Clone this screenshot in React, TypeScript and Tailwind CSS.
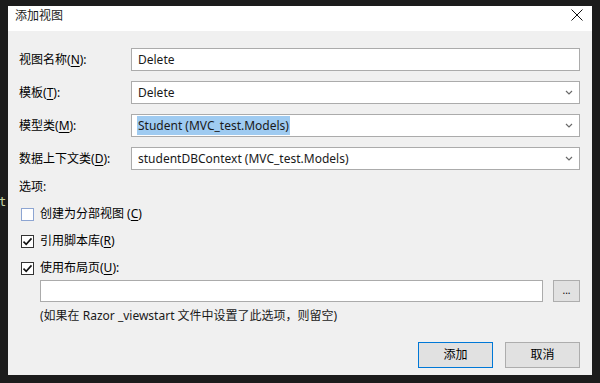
import React from "react";

const FONT = "font-['Noto_Sans','Noto_Sans_CJK_SC',sans-serif]";

function Key({ k }: { k: string }) {
  return <span className="underline underline-offset-2">{k}</span>;
}

function Chevron() {
  return (
    <svg width="8" height="5" viewBox="0 0 8 5" className="shrink-0">
      <path d="M1 1 L4 4 L7 1" fill="none" stroke="#6a6a6a" strokeWidth="1.2" />
    </svg>
  );
}

function Field({ value, combo, selected }: { value: string; combo?: boolean; selected?: boolean }) {
  return (
    <div className="h-[23px] bg-white border border-[#ababab] flex items-center pl-[5px] pr-[6px]">
      <span
        className={
          selected
            ? "bg-[#9fcbf1] px-[1px] leading-[19px] text-[#1a1a1a]"
            : "px-[1px] leading-[19px] text-[#1a1a1a]"
        }
      >
        {value}
      </span>
      <div className="flex-1" />
      {combo && <Chevron />}
    </div>
  );
}

function Check({ checked, hint }: { checked?: boolean; hint?: boolean }) {
  return (
    <div
      className={
        hint
          ? "w-[13px] h-[13px] bg-white border border-[#8da5d2] flex items-center justify-center"
          : "w-[13px] h-[13px] bg-white border border-[#333333] flex items-center justify-center"
      }
    >
      {checked && (
        <svg width="11" height="11" viewBox="0 0 11 11">
          <path d="M1.5 5.6 L4.2 8.3 L9.5 2.4" fill="none" stroke="#111" strokeWidth="1.6" />
        </svg>
      )}
    </div>
  );
}

export default function App() {
  const rows = [
    { label: "视图名称", k: "N", value: "Delete" },
    { label: "模板", k: "T", value: "Delete", combo: true },
    { label: "模型类", k: "M", value: "Student (MVC_test.Models)", combo: true, selected: true },
    { label: "数据上下文类", k: "D", value: "studentDBContext (MVC_test.Models)", combo: true },
  ];

  return (
    <div className={`relative w-[600px] h-[383px] overflow-hidden bg-[#1c1c1c] text-[12px] text-black ${FONT}`}>
      {/* editor text peeking behind the dialog */}
      <div className="absolute left-[-1px] top-[193px] font-['DejaVu_Sans_Mono',monospace] text-[12px] text-[#c9d7a6]">
        t:
      </div>

      <div className="relative ml-[8px] mt-[6px] w-[584px] h-[369px] flex flex-col bg-[#f0f0f0]">
        {/* title bar */}
        <div className="h-[25px] bg-white flex items-start pl-[7px] pr-[9px]">
          <span className="mt-[2px] leading-[16px] text-[#1a1a1a]">添加视图</span>
          <div className="flex-1" />
          <svg width="12" height="12" viewBox="0 0 12 12" className="mt-[3px]">
            <path d="M0.5 0.5 L11.5 11.5 M11.5 0.5 L0.5 11.5" stroke="#111" strokeWidth="1" />
          </svg>
        </div>

        {/* body */}
        <div className="flex-1 flex flex-col pl-[11px] pr-[12px] pt-[17px]">
          <div className="grid grid-cols-[112px_1fr] gap-y-[10px]">
            {rows.map((r) => (
              <React.Fragment key={r.label}>
                <div className="h-[23px] flex items-center leading-[16px]">
                  {r.label}(<Key k={r.k} />):
                </div>
                <Field value={r.value} combo={r.combo} selected={r.selected} />
              </React.Fragment>
            ))}
          </div>

          <div className="mt-[9px] leading-[16px]">选项:</div>

          <div className="mt-[9px] h-[20px] flex items-center gap-[6px] pl-[2px]">
            <Check hint />
            <span className="leading-[16px]">
              创建为分部视图 (<Key k="C" />)
            </span>
          </div>
          <div className="mt-[7px] h-[20px] flex items-center gap-[6px] pl-[2px]">
            <Check checked />
            <span className="leading-[16px]">
              引用脚本库(<Key k="R" />)
            </span>
          </div>
          <div className="mt-[7px] h-[20px] flex items-center gap-[6px] pl-[2px]">
            <Check checked />
            <span className="leading-[16px]">
              使用布局页(<Key k="U" />):
            </span>
          </div>

          <div className="mt-[2px] ml-[21px] flex gap-[10px]">
            <div className="flex-1 h-[22px] bg-white border border-[#ababab]" />
            <div className="w-[27px] h-[22px] bg-[#e1e1e1] border border-[#adadad] flex items-center justify-center text-[10px] leading-none pb-[3px]">
              ...
            </div>
          </div>

          <div className="mt-[6px] ml-[21px] leading-[16px] text-[#1a1a1a]">
            (如果在 Razor _viewstart 文件中设置了此选项，则留空)
          </div>

          <div className="mt-[18px] flex justify-end gap-[12px]">
            <div className="w-[75px] h-[26px] bg-[#e1e1e1] border border-[#0078d7] flex items-center justify-center">
              添加
            </div>
            <div className="w-[75px] h-[26px] bg-[#e1e1e1] border border-[#adadad] flex items-center justify-center">
              取消
            </div>
          </div>
        </div>
      </div>
    </div>
  );
}
